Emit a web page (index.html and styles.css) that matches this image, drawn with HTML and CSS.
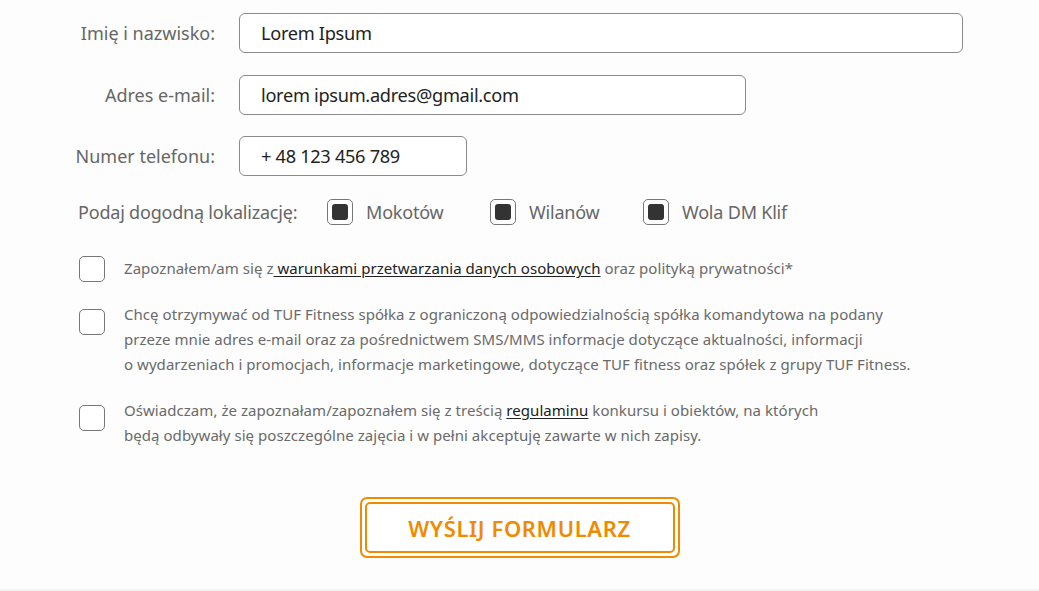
FILE: index.html
```html
<!DOCTYPE html>
<html lang="pl">
<head>
<meta charset="utf-8">
<link rel="stylesheet" href="styles.css">
</head>
<body>
<form class="form">
  <div class="field">
    <label class="field-label">Imię i nazwisko:</label>
    <div class="input input-wide">Lorem Ipsum</div>
  </div>
  <div class="field">
    <label class="field-label">Adres e-mail:</label>
    <div class="input input-mid">lorem ipsum.adres@gmail.com</div>
  </div>
  <div class="field">
    <label class="field-label">Numer telefonu:</label>
    <div class="input input-short">+ 48 123 456 789</div>
  </div>

  <div class="locations">
    <span class="loc-label">Podaj dogodną lokalizację:</span>
    <span class="loc loc-1"><span class="box checked"></span>Mokotów</span>
    <span class="loc loc-2"><span class="box checked"></span>Wilanów</span>
    <span class="loc"><span class="box checked"></span>Wola DM Klif</span>
  </div>

  <div class="consent consent-1">
    <span class="box"></span>
    <p class="consent-text">Zapoznałem/am się z<a href="#"> warunkami przetwarzania danych osobowych</a> oraz polityką prywatności*</p>
  </div>
  <div class="consent consent-2">
    <span class="box"></span>
    <p class="consent-text">Chcę otrzymywać od TUF Fitness spółka z ograniczoną odpowiedzialnością spółka komandytowa na podany<br>przeze mnie adres e-mail oraz za pośrednictwem SMS/MMS informacje dotyczące aktualności, informacji<br>o wydarzeniach i promocjach, informacje marketingowe, dotyczące TUF fitness oraz spółek z grupy TUF Fitness.</p>
  </div>
  <div class="consent consent-3">
    <span class="box"></span>
    <p class="consent-text">Oświadczam, że zapoznałam/zapoznałem się z treścią <a href="#">regulaminu</a> konkursu i obiektów, na których<br>będą odbywały się poszczególne zajęcia i w pełni akceptuję zawarte w nich zapisy.</p>
  </div>

  <div class="submit-wrap">
    <button type="button" class="submit"><span class="submit-inner">WYŚLIJ FORMULARZ</span></button>
  </div>
</form>
<div class="bottom-line"></div>
</body>
</html>
```

FILE: styles.css
```css
html, body {
  margin: 0;
  padding: 0;
  background: #fdfdfd;
}
body {
  font-family: "Noto Sans", "DejaVu Sans", sans-serif;
  width: 1039px;
  height: 591px;
  overflow: hidden;
  position: relative;
}
.form {
  padding-top: 13px;
  height: 577px;
  box-sizing: border-box;
}
.field {
  display: flex;
  align-items: center;
  gap: 24px;
}
.field + .field {
  margin-top: 21.5px;
}
.field-label {
  width: 215px;
  text-align: right;
  font-size: 18px;
  color: #666;
}
.input {
  height: 40px;
  box-sizing: border-box;
  border: 1px solid #8a8a8a;
  border-radius: 6px;
  background: #fff;
  padding-left: 21px;
  display: flex;
  align-items: center;
  font-size: 18.2px;
  color: #222;
  letter-spacing: -0.3px;
}
.input-wide { width: 724px; }
.input-mid { width: 507px; }
.input-short { width: 228px; }

.locations {
  display: flex;
  align-items: center;
  margin-top: 23px;
  padding-left: 78px;
  height: 26px;
  font-size: 18px;
  color: #666;
  letter-spacing: -0.2px;
}
.loc-label { width: 249px; }
.loc {
  display: flex;
  align-items: center;
  gap: 13px;
}
.loc-1 { width: 163px; }
.loc-2 { width: 153px; }

.box {
  width: 26px;
  height: 26px;
  box-sizing: border-box;
  border: 1px solid #777;
  border-radius: 5px;
  background: #fff;
  flex: none;
  position: relative;
}
.box.checked::after {
  content: "";
  position: absolute;
  left: 4px;
  top: 4px;
  width: 16px;
  height: 16px;
  border-radius: 3px;
  background: #333;
}

.consent {
  display: flex;
  align-items: flex-start;
  gap: 19px;
  padding-left: 79px;
}
.consent-1 { margin-top: 31px; }
.consent-2 { margin-top: 27px; }
.consent-3 { margin-top: 28px; }
.consent-text {
  margin: 0;
  font-size: 15px;
  line-height: 25px;
  color: #6a6a6a;
  letter-spacing: 0.05px;
}
.consent-2 .consent-text,
.consent-3 .consent-text { margin-top: -7px; }
.consent-text a {
  color: #222;
  text-decoration: underline;
  text-underline-offset: 2px;
}

.submit-wrap {
  display: flex;
  justify-content: center;
  margin-top: 49px;
}
.submit {
  width: 320px;
  height: 61px;
  padding: 3px;
  border: 2px solid #f08a00;
  border-radius: 7px;
  background: #fff;
  box-sizing: border-box;
  font-family: inherit;
  cursor: pointer;
}
.submit-inner {
  display: flex;
  align-items: center;
  justify-content: center;
  height: 100%;
  border: 2px solid #f08a00;
  border-radius: 5px;
  box-sizing: border-box;
  color: #f08a00;
  font-size: 22px;
  font-weight: 600;
  letter-spacing: 0.6px;
}
.bottom-line {
  position: absolute;
  left: 0;
  right: 0;
  bottom: 0;
  height: 2px;
  background: #f2f2f2;
}
```
